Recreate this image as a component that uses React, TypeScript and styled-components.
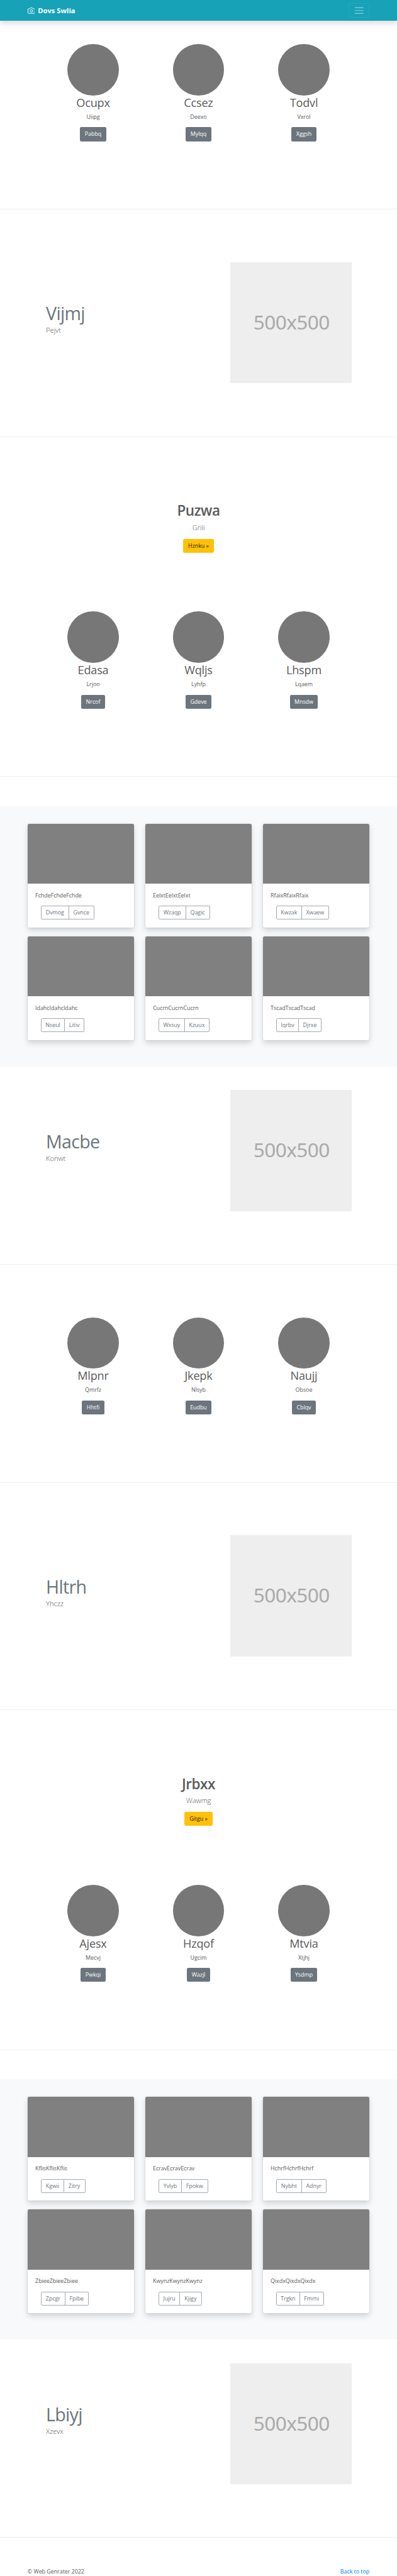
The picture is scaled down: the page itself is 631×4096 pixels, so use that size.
import React from "react";
import styled, { createGlobalStyle } from "styled-components";

/* The design is drawn on a 1080 x 7006 grid; x() and y() turn grid units into page pixels. */
const x = (n: number) => `${(n * 631) / 1080}px`;
const y = (n: number) => `${(n * 4096) / 7006}px`;

const Global = createGlobalStyle`
  *, *::before, *::after { box-sizing: border-box; }
  html, body { margin: 0; padding: 0; background: #fff; }
  body {
    font-family: "Open Sans", "Noto Sans", sans-serif;
    font-size: ${x(15.3)};
    letter-spacing: ${x(-0.08)};
    color: #5a5a5a;
    overflow-x: hidden;
  }
  h1, h2, p { margin: 0; }
  a { text-decoration: none; }
`;

const Page = styled.div`
  width: 631px;
  height: 4096px;
  overflow: hidden;
  background: #fff;
`;

/* ---------- top bar ---------- */

const Navbar = styled.header`
  display: flex;
  align-items: center;
  justify-content: space-between;
  height: ${y(56)};
  padding: 0 ${x(75)};
  background: #17a2b8;
  box-shadow: 0 ${y(8)} ${y(16)} rgba(0, 0, 0, 0.15);
`;

const Brand = styled.a`
  display: flex;
  align-items: center;
  gap: ${x(8)};
  color: #fff;
  font-size: ${x(19.2)};
  font-weight: 700;
  line-height: ${y(30)};
  letter-spacing: 0;
  white-space: nowrap;
`;

const CameraIcon = styled.svg`
  flex: none;
  width: ${x(20)};
  height: ${x(20)};
  fill: none;
  stroke: #fff;
  stroke-width: 2;
  stroke-linecap: round;
  stroke-linejoin: round;
`;

const Toggler = styled.button`
  display: flex;
  align-items: center;
  justify-content: center;
  width: ${x(56)};
  height: ${y(40)};
  padding: 0;
  background: transparent;
  border: 1px solid rgba(255, 255, 255, 0.08);
  border-radius: ${x(4)};
`;

const MenuIcon = styled.svg`
  flex: none;
  width: ${x(30)};
  height: ${x(30)};
  stroke: rgba(255, 255, 255, 0.5);
  stroke-width: 2;
  stroke-linecap: round;
`;

/* ---------- shared ---------- */

const Divider = styled.hr`
  height: 1px;
  margin: ${y(80)} 0 calc(${y(81)} - 1px);
  border: 0;
  background: #eeeeee;
`;

const Button = styled.a<{ $w: number; $tone?: "warning" }>`
  display: block;
  width: ${(p) => x(p.$w)};
  height: ${y(38)};
  border-radius: ${x(4)};
  background: ${(p) => (p.$tone ? "#ffc107" : "#6c757d")};
  color: ${(p) => (p.$tone ? "#212529" : "#fff")};
  line-height: ${y(38.4)};
  text-align: center;
  white-space: nowrap;
`;

/* ---------- circles ---------- */

const Trio = styled.section<{ $top: number }>`
  display: grid;
  grid-template-columns: repeat(3, 1fr);
  padding: ${(p) => y(p.$top)} ${x(110)} ${y(104)};
`;

const Person = styled.div`
  display: flex;
  flex-direction: column;
  align-items: center;
`;

const Circle = styled.div`
  width: ${x(140)};
  height: ${y(140)};
  border-radius: 50%;
  background: #777;
`;

const PersonName = styled.h2`
  height: ${y(38.3)};
  margin-bottom: ${y(8)};
  font-size: ${x(31)};
  font-weight: 400;
  line-height: ${y(40.4)};
  letter-spacing: ${x(-0.35)};
`;

const PersonText = styled.p`
  height: ${y(24)};
  margin-bottom: ${y(16)};
  line-height: ${y(25)};
`;

/* ---------- featurette ---------- */

const FeatureRow = styled.section`
  display: flex;
  justify-content: space-between;
  padding: ${y(64)} ${x(124)} ${y(64)} ${x(125)};
`;

const FeatureCopy = styled.div`
  padding-top: ${y(112)};
`;

const FeatureTitle = styled.h2`
  height: ${y(50)};
  margin-bottom: ${y(8)};
  color: #6c757d;
  font-size: ${x(49)};
  font-weight: 400;
  line-height: ${y(53)};
  letter-spacing: ${x(-1.2)};
`;

const Lead = styled.p`
  height: ${y(30)};
  font-size: ${x(19.3)};
  font-weight: 300;
  line-height: ${y(31)};
  letter-spacing: ${x(-0.15)};
`;

const Placeholder = styled.div`
  display: flex;
  align-items: center;
  justify-content: center;
  width: ${x(329.3)};
  height: ${y(329.3)};
  padding: 0 0 ${y(5)} ${x(3)};
  background: #eee;
  color: #aaa;
  font-family: "Noto Sans", "Open Sans", sans-serif;
  font-size: ${x(54)};
  line-height: 1;
  letter-spacing: ${x(-1)};
`;

/* ---------- banner ---------- */

const Banner = styled.section`
  display: flex;
  flex-direction: column;
  align-items: center;
  padding: ${y(96)} 0 ${y(112)};
`;

const BannerTitle = styled.h1`
  height: ${y(48)};
  margin-bottom: ${y(8)};
  font-size: ${x(38.5)};
  font-weight: 600;
  line-height: ${y(50.4)};
  letter-spacing: ${x(-0.7)};
`;

const BannerLead = styled(Lead)`
  margin-bottom: ${y(16)};
`;

/* ---------- album ---------- */

const Album = styled.section`
  display: grid;
  grid-template-columns: repeat(3, 1fr);
  column-gap: ${x(30)};
  row-gap: ${y(24)};
  padding: ${y(48)} ${x(75)} ${y(72)};
  background: #f8f9fa;
`;

const Card = styled.article`
  height: ${y(282)};
  border-radius: ${x(4)};
  overflow: hidden;
  background: #fff;
  box-shadow: 0 0 0 0.5px rgba(0, 0, 0, 0.1), 0 ${y(8)} ${y(16)} rgba(0, 0, 0, 0.15);
`;

const CardImage = styled.div`
  height: ${y(163)};
  background: #808080;
`;

const CardBody = styled.div`
  padding: ${y(20)} ${x(21)};
`;

const CardText = styled.p`
  height: ${y(24)};
  margin-bottom: ${y(16)};
  line-height: ${y(25)};
`;

const ButtonGroup = styled.div`
  display: flex;
  margin-left: ${x(15)};
`;

const OutlineButton = styled.a<{ $w: number }>`
  width: ${(p) => x(p.$w)};
  height: ${y(38)};
  border: 1px solid #a3a9ae;
  color: #6c757d;
  line-height: calc(${y(38.4)} - 2px);
  text-align: center;
  white-space: nowrap;

  &:first-child {
    border-radius: ${x(4)} 0 0 ${x(4)};
  }
  &:last-child {
    margin-left: ${x(-1)};
    border-left-width: 0;
    border-radius: 0 ${x(4)} ${x(4)} 0;
  }
`;

/* ---------- footer ---------- */

const Footer = styled.footer`
  display: flex;
  justify-content: space-between;
  padding: 0 ${x(75)};
  height: ${y(24)};
  line-height: ${y(25)};
`;

const TopLink = styled.a`
  color: #007bff;
`;

type PersonData = [name: string, text: string, button: string, width: number];
type CardData = [text: string, first: string, firstW: number, second: string, secondW: number];

const People = ({ items, top = 64 }: { items: PersonData[]; top?: number }) => (
  <Trio $top={top}>
    {items.map(([name, text, button, w]) => (
      <Person key={name}>
        <Circle />
        <PersonName>{name}</PersonName>
        <PersonText>{text}</PersonText>
        <Button $w={w}>{button}</Button>
      </Person>
    ))}
  </Trio>
);

const Feature = ({ title, text }: { title: string; text: string }) => (
  <FeatureRow>
    <FeatureCopy>
      <FeatureTitle>{title}</FeatureTitle>
      <Lead>{text}</Lead>
    </FeatureCopy>
    <Placeholder>500x500</Placeholder>
  </FeatureRow>
);

const Hero = ({ title, text, button, w }: { title: string; text: string; button: string; w: number }) => (
  <Banner>
    <BannerTitle>{title}</BannerTitle>
    <BannerLead>{text}</BannerLead>
    <Button $w={w} $tone="warning">
      {button}
    </Button>
  </Banner>
);

const Cards = ({ items }: { items: CardData[] }) => (
  <Album>
    {items.map(([text, a, aw, b, bw]) => (
      <Card key={text}>
        <CardImage />
        <CardBody>
          <CardText>{text}</CardText>
          <ButtonGroup>
            <OutlineButton $w={aw}>{a}</OutlineButton>
            <OutlineButton $w={bw}>{b}</OutlineButton>
          </ButtonGroup>
        </CardBody>
      </Card>
    ))}
  </Album>
);

export default function App() {
  return (
    <Page>
      <Global />
      <Navbar>
        <Brand>
          <CameraIcon viewBox="0 0 24 24">
            <path d="M23 19a2 2 0 0 1-2 2H3a2 2 0 0 1-2-2V8a2 2 0 0 1 2-2h4l2-3h6l2 3h4a2 2 0 0 1 2 2z" />
            <circle cx="12" cy="13" r="4" />
          </CameraIcon>
          Dovs Swlia
        </Brand>
        <Toggler aria-label="Menu">
          <MenuIcon viewBox="0 0 30 30">
            <path d="M4 7h22M4 15h22M4 23h22" />
          </MenuIcon>
        </Toggler>
      </Navbar>

      <People
        items={[
          ["Ocupx", "Uiipg", "Pabbq", 71],
          ["Ccsez", "Deexo", "Mylqq", 70.3],
          ["Todvl", "Vxrol", "Xggsh", 69.8],
        ]}
      />
      <Divider />
      <Feature title="Vijmj" text="Pejvt" />
      <Divider />
      <Hero title="Puzwa" text="Grili" button="Hznku »" w={84} />
      <People
        top={48}
        items={[
          ["Edasa", "Lrjoo", "Nrcof", 65.4],
          ["Wqljs", "Lyhfp", "Gdeve", 70.3],
          ["Lhspm", "Lqaem", "Mnsdw", 76.5],
        ]}
      />
      <Divider />
      <Cards
        items={[
          ["FchdeFchdeFchde", "Dvmog", 77, "Gvnce", 70],
          ["EelxtEelxtEelxt", "Wzaqp", 75, "Qagic", 67],
          ["RfaixRfaixRfaix", "Kwzak", 70.5, "Xwaew", 75],
          ["IdahcIdahcIdahc", "Nseul", 66, "Litiv", 54],
          ["CucrnCucrnCucrn", "Wxsuy", 72, "Kzuux", 68.5],
          ["TscadTscadTscad", "Iqrbv", 62.3, "Djrxe", 63],
        ]}
      />
      <Feature title="Macbe" text="Konwt" />
      <Divider />
      <People
        items={[
          ["Mlpnr", "Qmrfz", "Hhtfi", 61.3],
          ["Jkepk", "Nlsyb", "Eudbu", 71.6],
          ["Naujj", "Obsoe", "Cblqv", 66.1],
        ]}
      />
      <Divider />
      <Feature title="Hltrh" text="Yhczz" />
      <Divider />
      <Hero title="Jrbxx" text="Wawmg" button="Gitgu »" w={78.5} />
      <People
        top={48}
        items={[
          ["Ajesx", "Mecvj", "Pwkqi", 68.2],
          ["Hzqof", "Ugcim", "Wazjl", 63.4],
          ["Mtvia", "Xtjhj", "Ysdmp", 73],
        ]}
      />
      <Divider />
      <Cards
        items={[
          ["KflisKflisKflis", "Kgwii", 64, "Zitry", 58],
          ["EcravEcravEcrav", "Yvlyb", 64, "Fpokw", 72.3],
          ["HchrfHchrfHchrf", "Nybht", 70.5, "Adnyr", 68],
          ["ZbieeZbieeZbiee", "Zpcgr", 66.8, "Fpibe", 65],
          ["KwynzKwynzKwynz", "Jujru", 59.2, "Kjigy", 60],
          ["QixdxQixdxQixdx", "Trgkn", 65.4, "Fmrni", 66],
        ]}
      />
      <Feature title="Lbiyj" text="Xzevx" />
      <Divider />
      <Footer>
        <span>© Web Genrater 2022</span>
        <TopLink>Back to top</TopLink>
      </Footer>
    </Page>
  );
}
